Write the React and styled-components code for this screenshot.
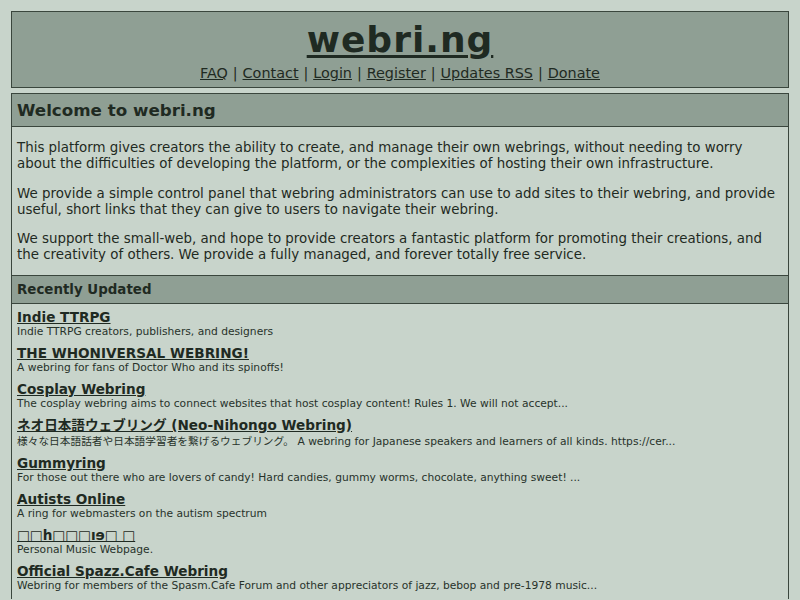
import React from "react";
import styled, { createGlobalStyle } from "styled-components";

const GlobalStyle = createGlobalStyle`
  html, body {
    margin: 0;
    padding: 0;
    background: #c8d4cb;
  }
  body {
    font-family: "DejaVu Sans", "Noto Sans CJK JP", sans-serif;
    font-size: 13.4px;
    color: #1f2a22;
  }
`;

const Page = styled.div`
  padding: 11px;
  display: flex;
  flex-direction: column;
  gap: 5px;
`;

const Masthead = styled.header`
  background: #8f9f94;
  border: 1px solid #3a463d;
  padding: 7px 5px 6px;
  text-align: center;
`;

const Title = styled.a`
  display: block;
  font-size: 36px;
  font-weight: bold;
  letter-spacing: 1px;
  color: #1f2a22;
  text-decoration: underline;
  text-decoration-thickness: 3px;
  text-underline-offset: 3px;
`;

const Nav = styled.nav`
  margin-top: 5px;
  font-size: 14.4px;
  color: #1f2a22;
`;

const NavLink = styled.a`
  color: #1f2a22;
  text-decoration: underline;
`;

const Sep = styled.span`
  margin: 0 0.34em;
`;

const Panel = styled.main`
  border: 1px solid #3a463d;
  border-bottom: none;
`;

const Band = styled.h2`
  margin: 0;
  background: #8f9f94;
  border-bottom: 1px solid #3a463d;
  border-top: ${(p) => (p.$divided ? "1px solid #3a463d" : "none")};
  padding: 6px 5px;
  font-size: ${(p) => p.$size};
  font-weight: bold;
`;

const Body = styled.section`
  padding: 0 5px;
`;

const Paragraph = styled.p`
  margin: 13.4px 0;
  line-height: 16px;

  &:last-child {
    margin-bottom: 11.5px;
  }
`;

const RingList = styled.ul`
  list-style: none;
  margin: 0;
  padding: 5px 5px 0;
`;

const Ring = styled.li`
  margin-bottom: 7px;
`;

const RingName = styled.a`
  display: block;
  font-weight: bold;
  font-size: 13.6px;
  line-height: 16px;
  color: #1f2a22;
  text-decoration: underline;
`;

const RingDesc = styled.div`
  font-size: 10.7px;
  color: #27322a;
`;

const links = ["FAQ", "Contact", "Login", "Register", "Updates RSS", "Donate"];

const rings = [
  ["Indie TTRPG", "Indie TTRPG creators, publishers, and designers"],
  ["THE WHONIVERSAL WEBRING!", "A webring for fans of Doctor Who and its spinoffs!"],
  [
    "Cosplay Webring",
    "The cosplay webring aims to connect websites that host cosplay content! Rules 1. We will not accept...",
  ],
  [
    "ネオ日本語ウェブリング (Neo-Nihongo Webring)",
    "様々な日本語話者や日本語学習者を繋げるウェブリング。 A webring for Japanese speakers and learners of all kinds. https://cer...",
  ],
  [
    "Gummyring",
    "For those out there who are lovers of candy! Hard candies, gummy worms, chocolate, anything sweet! ...",
  ],
  ["Autists Online", "A ring for webmasters on the autism spectrum"],
  ["□□h□□□ıɘ□ □", "Personal Music Webpage."],
  [
    "Official Spazz.Cafe Webring",
    "Webring for members of the Spasm.Cafe Forum and other appreciators of jazz, bebop and pre-1978 music...",
  ],
];

export default function App() {
  return (
    <>
      <GlobalStyle />
      <Page>
        <Masthead>
          <Title href="#">webri.ng</Title>
          <Nav>
            {links.map((l, i) => (
              <React.Fragment key={l}>
                {i > 0 && <Sep>|</Sep>}
                <NavLink href="#">{l}</NavLink>
              </React.Fragment>
            ))}
          </Nav>
        </Masthead>
        <Panel>
          <Band $size="16.7px">Welcome to webri.ng</Band>
          <Body>
            <Paragraph>
              This platform gives creators the ability to create, and manage their own
              webrings, without needing to worry about the difficulties of developing the
              platform, or the complexities of hosting their own infrastructure.
            </Paragraph>
            <Paragraph>
              We provide a simple control panel that webring administrators can use to add
              sites to their webring, and provide useful, short links that they can give to
              users to navigate their webring.
            </Paragraph>
            <Paragraph>
              We support the small-web, and hope to provide creators a fantastic platform for
              promoting their creations, and the creativity of others. We provide a fully
              managed, and forever totally free service.
            </Paragraph>
          </Body>
          <Band $divided $size="13.4px">Recently Updated</Band>
          <RingList>
            {rings.map(([name, desc]) => (
              <Ring key={name}>
                <RingName href="#">{name}</RingName>
                <RingDesc>{desc}</RingDesc>
              </Ring>
            ))}
          </RingList>
        </Panel>
      </Page>
    </>
  );
}
